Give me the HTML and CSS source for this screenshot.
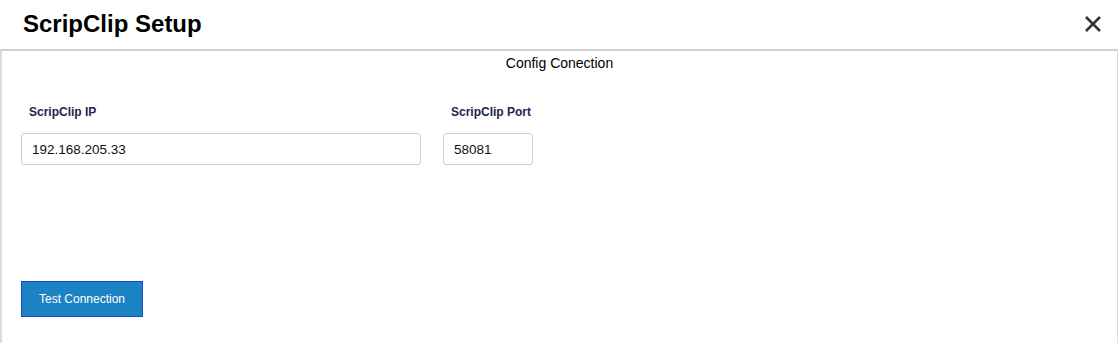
FILE: index.html
```html
<!DOCTYPE html>
<html lang="en">
<head>
<meta charset="utf-8">
<title>ScripClip Setup</title>
<link rel="stylesheet" href="styles.css">
</head>
<body>
<div class="dialog">
  <header class="dialog-header">
    <h1 class="dialog-title">ScripClip Setup</h1>
    <button class="close-btn" type="button" aria-label="Close">
      <svg width="18" height="18" viewBox="0 0 18 18"><path d="M2 2 L16 16 M16 2 L2 16" stroke="#333" stroke-width="2.6" stroke-linecap="butt" fill="none"/></svg>
    </button>
  </header>
  <section class="panel">
    <div class="panel-title">Config Conection</div>
    <div class="fields">
      <div class="field field-ip">
        <label class="field-label">ScripClip IP</label>
        <input class="field-input" type="text" value="192.168.205.33">
      </div>
      <div class="field field-port">
        <label class="field-label">ScripClip Port</label>
        <input class="field-input" type="text" value="58081">
      </div>
    </div>
    <div class="actions">
      <button class="btn-primary" type="button">Test Connection</button>
    </div>
  </section>
</div>
</body>
</html>
```
FILE: styles.css
```css
* { box-sizing: border-box; }
html, body { margin: 0; padding: 0; background: #fff; }
body { font-family: "Liberation Sans", Arial, sans-serif; color: #000; }

.dialog { width: 1120px; height: 343px; overflow: hidden; }

.dialog-header {
  height: 49px;
  display: flex;
  align-items: center;
  justify-content: space-between;
  padding: 0 18px 0 23px;
}
.dialog-title {
  margin: 0;
  font-size: 24px;
  font-weight: bold;
  line-height: 28px;
  padding-bottom: 2px;
}
.close-btn {
  border: 0;
  background: none;
  padding: 0;
  width: 18px;
  height: 18px;
  display: flex;
  cursor: pointer;
  margin-bottom: 1px;
}

.panel {
  margin: 0 2px 0 0;
  border-top: 2px solid #cfcfcf;
  border-left: 2px solid #dcdcdc;
  border-right: 1px solid #dcdcdc;
  height: 300px;
  padding: 0 0 0 19px;
}
.panel-title {
  text-align: center;
  font-size: 14px;
  line-height: 16px;
  padding-top: 4px;
  margin-left: -19px;
}

.fields {
  display: flex;
  gap: 22px;
  margin-top: 34px;
}
.field { display: flex; flex-direction: column; }
.field-ip { width: 400px; }
.field-port { width: 90px; }
.field-label {
  font-size: 12px;
  font-weight: bold;
  color: #23234f;
  line-height: 14px;
  padding-left: 8px;
  margin-bottom: 14px;
}
.field-input {
  height: 32px;
  border: 1px solid #cfcfcf;
  border-radius: 3px;
  padding: 0 10px;
  font-family: "Liberation Sans", Arial, sans-serif;
  font-size: 13.5px;
  color: #111;
  background: #fff;
  outline: none;
}

.actions { margin-top: 116px; }
.btn-primary {
  width: 122px;
  height: 36px;
  background: #1b83c4;
  border: 1px solid #1a47cc;
  color: #fff;
  font-family: "Liberation Sans", Arial, sans-serif;
  font-size: 12px;
  padding: 0;
  cursor: pointer;
}
```
